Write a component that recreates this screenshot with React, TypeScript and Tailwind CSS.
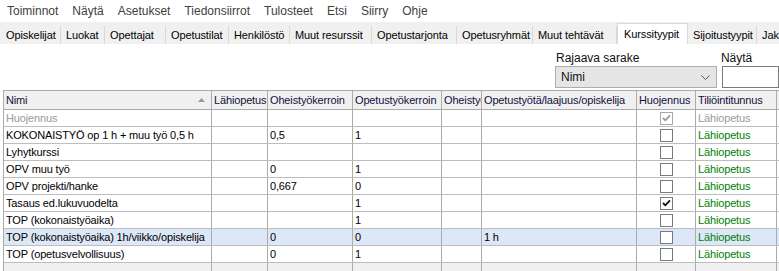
import React from "react";

const menu = ["Toiminnot", "Näytä", "Asetukset", "Tiedonsiirrot", "Tulosteet", "Etsi", "Siirry", "Ohje"];
const tabs: [string, number][] = [
  ["Opiskelijat", 60],
  ["Luokat", 44],
  ["Opettajat", 61],
  ["Opetustilat", 63],
  ["Henkilöstö", 61],
  ["Muut resurssit", 82],
  ["Opetustarjonta", 85],
  ["Opetusryhmät", 76],
  ["Muut tehtävät", 84],
  ["Kurssityypit", 71],
  ["Sijoitustyypit", 69],
  ["Jaksot", 60],
];

const cols = [208, 56, 85, 89, 40, 155, 59, 81, 40];
const headers = ["Nimi", "Lähiopetus", "Oheistyökerroin", "Opetustyökerroin", "Oheistyökerroin", "Opetustyötä/laajuus/opiskelija", "Huojennus", "Tiliöintitunnus", ""];

type Row = { name: string; ohe: string; ope: string; lo: string; check: boolean; gray?: boolean; sel?: boolean };
const rows: Row[] = [
  { name: "Huojennus", ohe: "", ope: "", lo: "", check: true, gray: true },
  { name: "KOKONAISTYÖ op 1 h + muu työ 0,5 h", ohe: "0,5", ope: "1", lo: "", check: false },
  { name: "Lyhytkurssi", ohe: "", ope: "", lo: "", check: false },
  { name: "OPV muu työ", ohe: "0", ope: "1", lo: "", check: false },
  { name: "OPV projekti/hanke", ohe: "0,667", ope: "0", lo: "", check: false },
  { name: "Tasaus ed.lukuvuodelta", ohe: "", ope: "1", lo: "", check: true },
  { name: "TOP (kokonaistyöaika)", ohe: "", ope: "1", lo: "", check: false },
  { name: "TOP (kokonaistyöaika) 1h/viikko/opiskelija", ohe: "0", ope: "0", lo: "1 h", check: false, sel: true },
  { name: "TOP (opetusvelvollisuus)", ohe: "0", ope: "1", lo: "", check: false },
];

function Check({ on, gray }: { on: boolean; gray?: boolean }) {
  return (
    <div className={`w-[13px] h-[13px] border ${gray ? "border-[#a8a8a8]" : "border-[#7a7a7a]"} bg-white flex items-center justify-center`}>
      {on && (
        <svg width="9" height="8" viewBox="0 0 9 8">
          <path d="M1 4 L3.3 6.3 L8 1.3" fill="none" stroke={gray ? "#9a9a9a" : "#111"} strokeWidth="1.8" />
        </svg>
      )}
    </div>
  );
}

export default function App() {
  return (
    <div className="w-[779px] h-[271px] overflow-hidden bg-white" style={{ fontFamily: "'Liberation Sans', Arial, sans-serif" }}>
      {/* menu */}
      <div className="h-[22px] flex items-center pl-[0px] text-[12px] text-[#404040]">
        {menu.map((m) => (
          <div key={m} className="px-[7px] leading-[22px]">{m}</div>
        ))}
      </div>
      {/* tabs */}
      <div className="h-[22px] bg-[#f0f0f0] flex items-end pl-[1px] text-[11px] text-black tracking-[-0.1px] whitespace-nowrap overflow-hidden">
        {tabs.map(([t, w]) => {
          const sel = t === "Kurssityypit";
          return sel ? (
            <div key={t} style={{ width: w }} className="shrink-0 h-[21px] bg-white border-x border-t border-[#d9d9d9] px-[6px] pt-[3px] leading-[14px]">
              {t}
            </div>
          ) : (
            <div key={t} style={{ width: w }} className="shrink-0 h-[18px] border-r border-[#d9d9d9] px-[5px] pt-[3px] leading-[12px] overflow-hidden">
              {t}
            </div>
          );
        })}
      </div>
      {/* filter */}
      <div className="h-[46px] flex pl-[555px] text-[12px] text-[#111]">
        <div className="w-[170px] pt-[7px]">
          <div className="leading-[14px] pl-[1px]">Rajaava sarake</div>
          <div className="mt-[1px] h-[22px] bg-[#e5e5e5] border border-[#adadad] flex items-center justify-between pl-[5px] pr-[6px]">
            <span>Nimi</span>
            <svg width="9" height="5" viewBox="0 0 9 5">
              <path d="M0.5 0.5 L4.5 4.5 L8.5 0.5" fill="none" stroke="#555" strokeWidth="1" />
            </svg>
          </div>
        </div>
        <div className="ml-[5px] w-[60px] pt-[7px]">
          <div className="leading-[14px] -ml-[1px]">Näytä</div>
          <div className="mt-[1px] h-[22px] bg-white border border-[#7a7a7a]" />
        </div>
      </div>
      {/* grid */}
      <div className="ml-[3px] border-l border-t border-[#ababab] text-[11px] tracking-[-0.15px] whitespace-nowrap">
        <div className="flex h-[19px] bg-[#f0f0f0] border-b border-[#ababab] text-[#10103f]">
          {cols.map((w, i) => (
            <div key={i} style={{ width: w }} className="shrink-0 border-r border-[#ababab] px-[2px] leading-[18px] overflow-hidden relative">
              {headers[i]}
              {i === 0 && (
                <svg className="absolute right-[6px] top-[7px]" width="7" height="4" viewBox="0 0 7 4">
                  <path d="M0 4 L3.5 0 L7 4 Z" fill="#9a9a9a" />
                </svg>
              )}
            </div>
          ))}
        </div>
        {rows.map((r) => (
          <div key={r.name} className={`flex h-[17px] border-b border-[#bdbdbd] ${r.sel ? "bg-[#dce8f7]" : "bg-white"}`}>
            {cols.map((w, i) => {
              let content: React.ReactNode = "";
              let cls = "text-black";
              if (i === 0) {
                content = r.name;
                if (r.gray) cls = "text-[#9a9a9a]";
              } else if (i === 2) content = r.ohe;
              else if (i === 3) content = r.ope;
              else if (i === 5) content = r.lo;
              else if (i === 6) content = <Check on={r.check} gray={r.gray} />;
              else if (i === 7) {
                content = "Lähiopetus";
                cls = r.gray ? "text-[#9a9a9a]" : "text-[#008000]";
              }
              return (
                <div
                  key={i}
                  style={{ width: w }}
                  className={`shrink-0 border-r border-[#ababab] ${i === 6 ? "flex items-center justify-center" : "px-[2px]"} leading-[16px] overflow-hidden ${cls}`}
                >
                  {content}
                </div>
              );
            })}
          </div>
        ))}
        <div className="flex h-[17px] bg-[#f0f0f0]">
          {cols.map((w, i) => (
            <div key={i} style={{ width: w }} className="shrink-0 border-r border-[#ababab]" />
          ))}
        </div>
      </div>
    </div>
  );
}
